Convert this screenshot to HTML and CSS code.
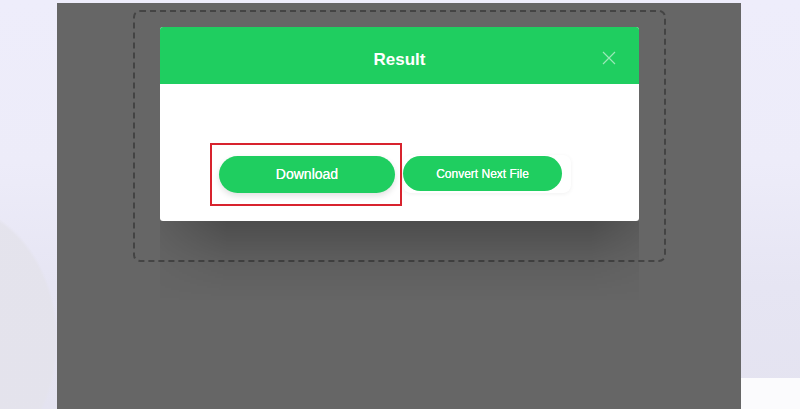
FILE: index.html
```html
<!DOCTYPE html>
<html lang="en">

<head>
    <meta charset="UTF-8">
    <meta name="viewport" content="width=device-width, initial-scale=1.0">
    <title>Result</title>
    <link rel="stylesheet" href="styles.css">
</head>

<body>
    <div class="page">
        <div class="mask">
            <div class="drop">
                <div class="dialog">
                    <div class="dialog-head">
                        <h2>Result</h2>
                        <span class="close">
                            <svg width="14" height="14" viewBox="0 0 14 14">
                                <path d="M1 1L13 13M13 1L1 13" stroke="rgba(255,255,255,0.55)" stroke-width="1.2" fill="none"/>
                            </svg>
                        </span>
                    </div>
                    <div class="dialog-body">
                        <div class="btn-wrap">
                            <a class="btn btn-download">Download</a>
                            <span class="mark"></span>
                        </div>
                        <div class="btn-card">
                            <a class="btn btn-next">Convert Next File</a>
                        </div>
                    </div>
                </div>
            </div>
        </div>
    </div>
</body>

</html>
```

FILE: styles.css
```css
* {
    margin: 0;
    padding: 0;
    box-sizing: border-box;
}

html,
body {
    width: 800px;
    height: 409px;
    overflow: hidden;
}

body {
    font-family: "Liberation Sans", Arial, sans-serif;
    background:
        linear-gradient(#fbfbfd, #fbfbfd) right bottom / 60px 31px no-repeat,
        radial-gradient(ellipse 150px 190px at -50px 340px, rgba(228, 227, 236, 0.95) 70%, rgba(228, 227, 236, 0) 72%),
        linear-gradient(180deg, #eeedfb 0%, #edecf9 40%, #e6e5f3 70%, #e4e3f0 100%);
}

.page {
    padding: 3px 0 0 57px;
}

.mask {
    width: 684px;
    height: 406px;
    background-color: #666666;
    padding: 7px 0 0 76px;
}

.drop {
    width: 533px;
    height: 252px;
    border: 2px dashed #444444;
    border-radius: 7px;
    padding: 15px 25px;
}

.dialog {
    width: 479px;
    height: 194px;
    background-color: #fff;
    border-radius: 3px;
    position: relative;
}

/* 弹窗下方的阴影 */
.dialog::after {
    content: "";
    position: absolute;
    left: 0;
    right: 0;
    top: 100%;
    height: 80px;
    background: linear-gradient(180deg, rgba(0, 0, 0, 0.25), rgba(0, 0, 0, 0.08) 50%, rgba(0, 0, 0, 0));
    -webkit-mask-image: linear-gradient(90deg, rgba(0, 0, 0, 0.3), #000 14%, #000 90%, rgba(0, 0, 0, 0.5));
    mask-image: linear-gradient(90deg, rgba(0, 0, 0, 0.3), #000 14%, #000 90%, rgba(0, 0, 0, 0.5));
}

.dialog-head {
    height: 57px;
    background-color: #1fce60;
    border-radius: 3px 3px 0 0;
    display: flex;
    align-items: center;
    justify-content: center;
    position: relative;
}

.dialog-head h2 {
    color: #fff;
    font-size: 17px;
    font-weight: bold;
    padding-top: 8px;
}

.close {
    position: absolute;
    right: 23px;
    top: 24px;
    width: 14px;
    height: 14px;
}

.close svg {
    display: block;
}

.dialog-body {
    display: flex;
    align-items: center;
    padding: 71px 0 0 59px;
}

.btn-wrap {
    position: relative;
}

.btn {
    display: flex;
    align-items: center;
    justify-content: center;
    color: #fff;
    background-color: #1fce60;
    border-radius: 20px;
    text-shadow: 0 0 0.4px #fff;
}

.btn-download {
    width: 176px;
    height: 37px;
    font-size: 14px;
    box-shadow: 0 3px 6px rgba(0, 0, 0, 0.12);
}

.mark {
    position: absolute;
    left: -9px;
    top: -13px;
    width: 192px;
    height: 63px;
    border: 2px solid #d8232e;
}

.btn-card {
    margin-left: 8px;
    width: 168px;
    height: 38px;
    padding: 1px 0;
    border-radius: 8px;
    background-color: #fff;
    box-shadow: 0 1px 4px rgba(0, 0, 0, 0.06);
}

.btn-next {
    width: 159px;
    height: 35px;
    font-size: 12px;
    border-radius: 18px;
}
```
